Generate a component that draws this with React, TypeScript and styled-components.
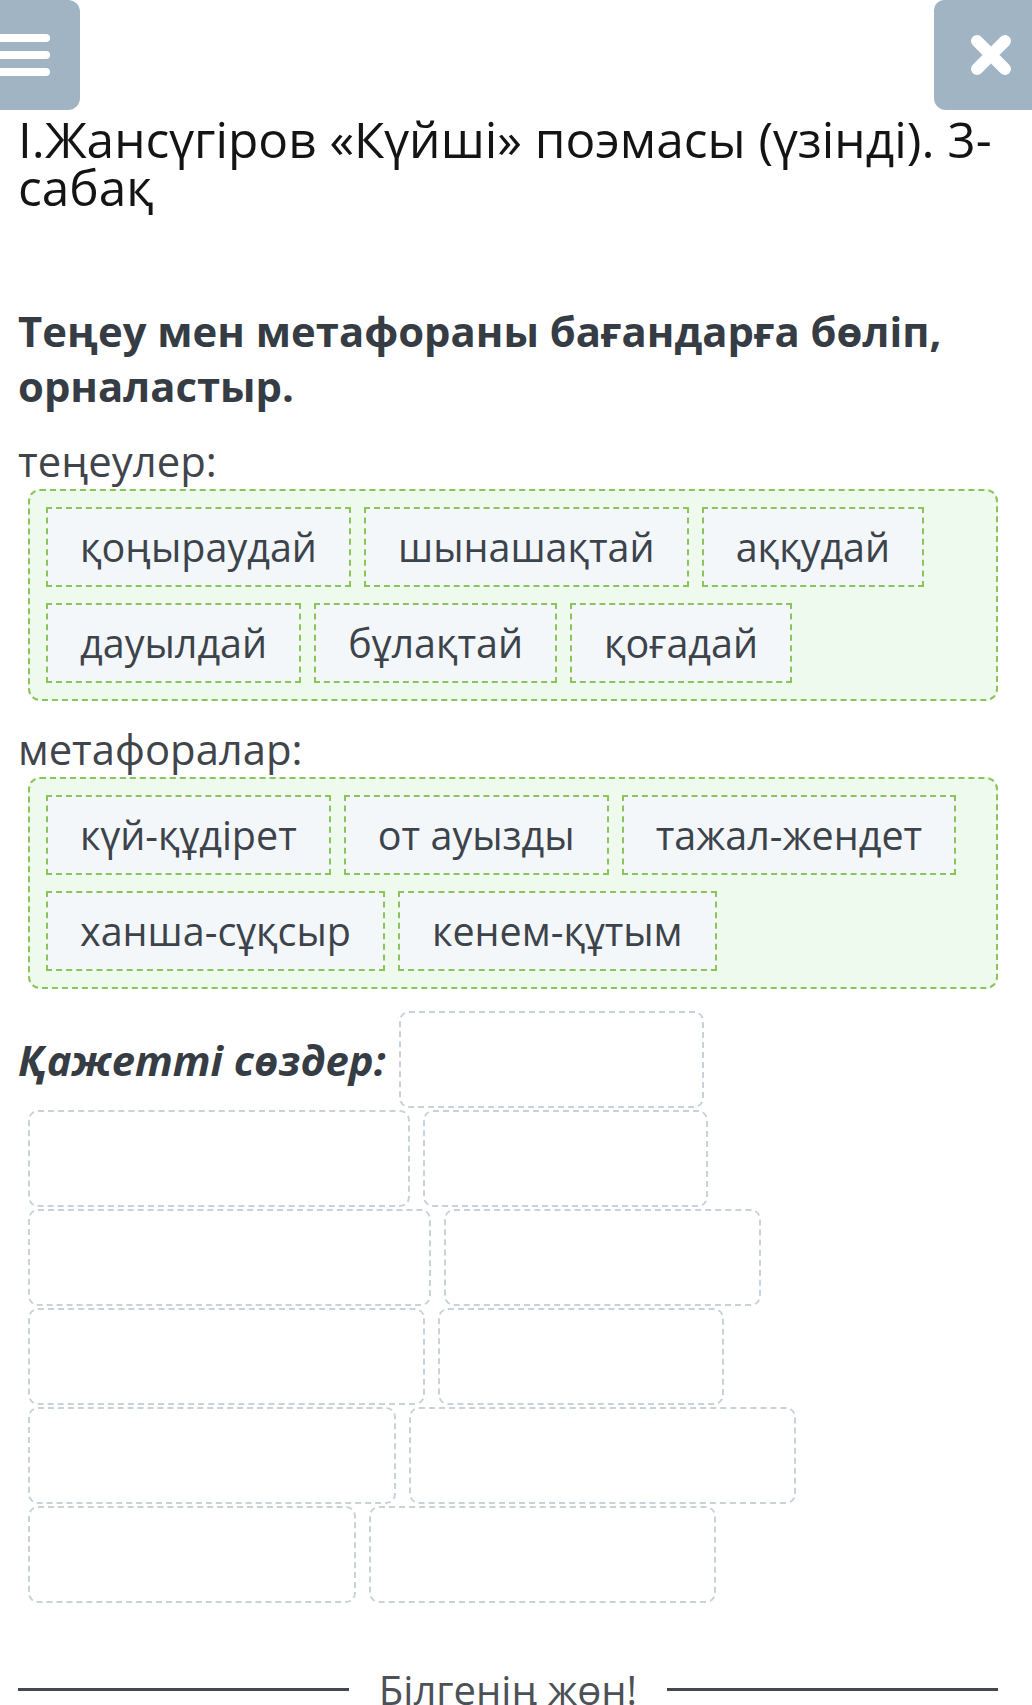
import React from "react";
import styled, { createGlobalStyle } from "styled-components";

const GlobalStyle = createGlobalStyle`
  html, body {
    margin: 0;
    padding: 0;
    background: #ffffff;
  }
  body {
    font-family: "Open Sans", "Noto Sans", "DejaVu Sans", sans-serif;
    color: #3d434a;
  }
  * { box-sizing: border-box; }
`;

const Page = styled.div`
  width: 1032px;
  padding: 0 18px;
`;

const Header = styled.header`
  display: flex;
  justify-content: space-between;
  align-items: flex-start;
  height: 110px;
  margin: 0 -18px;
`;

const MenuButton = styled.button`
  width: 80px;
  height: 110px;
  border: none;
  padding: 0;
  background: #a0b4c3;
  border-radius: 0 12px 12px 0;
  display: flex;
  flex-direction: column;
  justify-content: center;
  gap: 9px;
`;

const MenuLine = styled.span`
  display: block;
  width: 50px;
  height: 8px;
  background: #ffffff;
  border-radius: 0 4px 4px 0;
`;

const CloseButton = styled.button`
  width: 98px;
  height: 110px;
  border: none;
  padding: 0 0 0 16px;
  background: #a0b4c3;
  border-radius: 10px 0 0 12px;
  display: flex;
  align-items: center;
  justify-content: center;
`;

const Title = styled.h1`
  margin: 5px 0 92px;
  font-size: 49.6px;
  line-height: 48px;
  font-weight: 400;
  color: #141414;
`;

const Heading = styled.h2`
  margin: 0 0 20px;
  font-size: 41.8px;
  line-height: 55px;
  font-weight: 700;
  color: #363c44;
`;

const Label = styled.div`
  font-size: 41.8px;
  line-height: 56px;
  color: #3f454b;
`;

const Bucket = styled.div`
  margin: 0 16px 20px 10px;
  padding: 16px;
  border: 2px dashed #8cc45a;
  border-radius: 12px;
  background: #effaef;
  display: flex;
  flex-wrap: wrap;
  column-gap: 13px;
  row-gap: 16px;
`;

const Chip = styled.div`
  height: 80px;
  padding: 0 32px;
  display: flex;
  align-items: center;
  justify-content: center;
  border: 2px dashed #8cc45a;
  background: #f3f7fa;
  font-size: 39.5px;
  color: #3d434a;
  white-space: nowrap;
`;

const Pool = styled.div`
  margin-top: 22px;
  display: flex;
  flex-wrap: wrap;
  align-items: center;
  column-gap: 3px;
  row-gap: 2px;
`;

const PoolLabel = styled.div`
  font-size: 41.8px;
  line-height: 55px;
  font-weight: 700;
  font-style: italic;
  color: #363c44;
`;

const Slot = styled.div<{ $w: number }>`
  width: ${(p) => p.$w}px;
  height: 97px;
  margin-left: 10px;
  border: 2px dashed #c9d2d8;
  border-radius: 10px;
  background: #ffffff;
`;

const Footer = styled.div`
  margin: 59px 16px 0 0;
  display: flex;
  align-items: center;
  gap: 30px;
`;

const Rule = styled.div`
  flex: 1;
  height: 3px;
  background: #44494f;
`;

const FooterText = styled.div`
  font-size: 40px;
  color: #4c5157;
  white-space: nowrap;
`;

const similes = ["қоңыраудай", "шынашақтай", "аққудай", "дауылдай", "бұлақтай", "қоғадай"];
const metaphors = ["күй-құдірет", "от ауызды", "тажал-жендет", "ханша-сұқсыр", "кенем-құтым"];
const slotWidths = [305, 382, 285, 403, 317, 397, 286, 368, 387, 328, 347];

export default function App() {
  return (
    <>
      <GlobalStyle />
      <Page>
        <Header>
          <MenuButton aria-label="menu">
            <MenuLine />
            <MenuLine />
            <MenuLine />
          </MenuButton>
          <CloseButton aria-label="close">
            <svg width="44" height="44" viewBox="0 0 44 44">
              <path
                d="M8 8 L36 36 M36 8 L8 36"
                stroke="#ffffff"
                strokeWidth="12"
                strokeLinecap="round"
              />
            </svg>
          </CloseButton>
        </Header>

        <Title>І.Жансүгіров «Күйші» поэмасы (үзінді). 3-сабақ</Title>

        <Heading>Теңеу мен метафораны бағандарға бөліп, орналастыр.</Heading>

        <Label>теңеулер:</Label>
        <Bucket>
          {similes.map((w) => (
            <Chip key={w}>{w}</Chip>
          ))}
        </Bucket>

        <Label>метафоралар:</Label>
        <Bucket>
          {metaphors.map((w) => (
            <Chip key={w}>{w}</Chip>
          ))}
        </Bucket>

        <Pool>
          <PoolLabel>Қажетті сөздер:</PoolLabel>
          {slotWidths.map((w, i) => (
            <Slot key={i} $w={w} />
          ))}
        </Pool>

        <Footer>
          <Rule />
          <FooterText>Білгенің жөн!</FooterText>
          <Rule />
        </Footer>
      </Page>
    </>
  );
}
